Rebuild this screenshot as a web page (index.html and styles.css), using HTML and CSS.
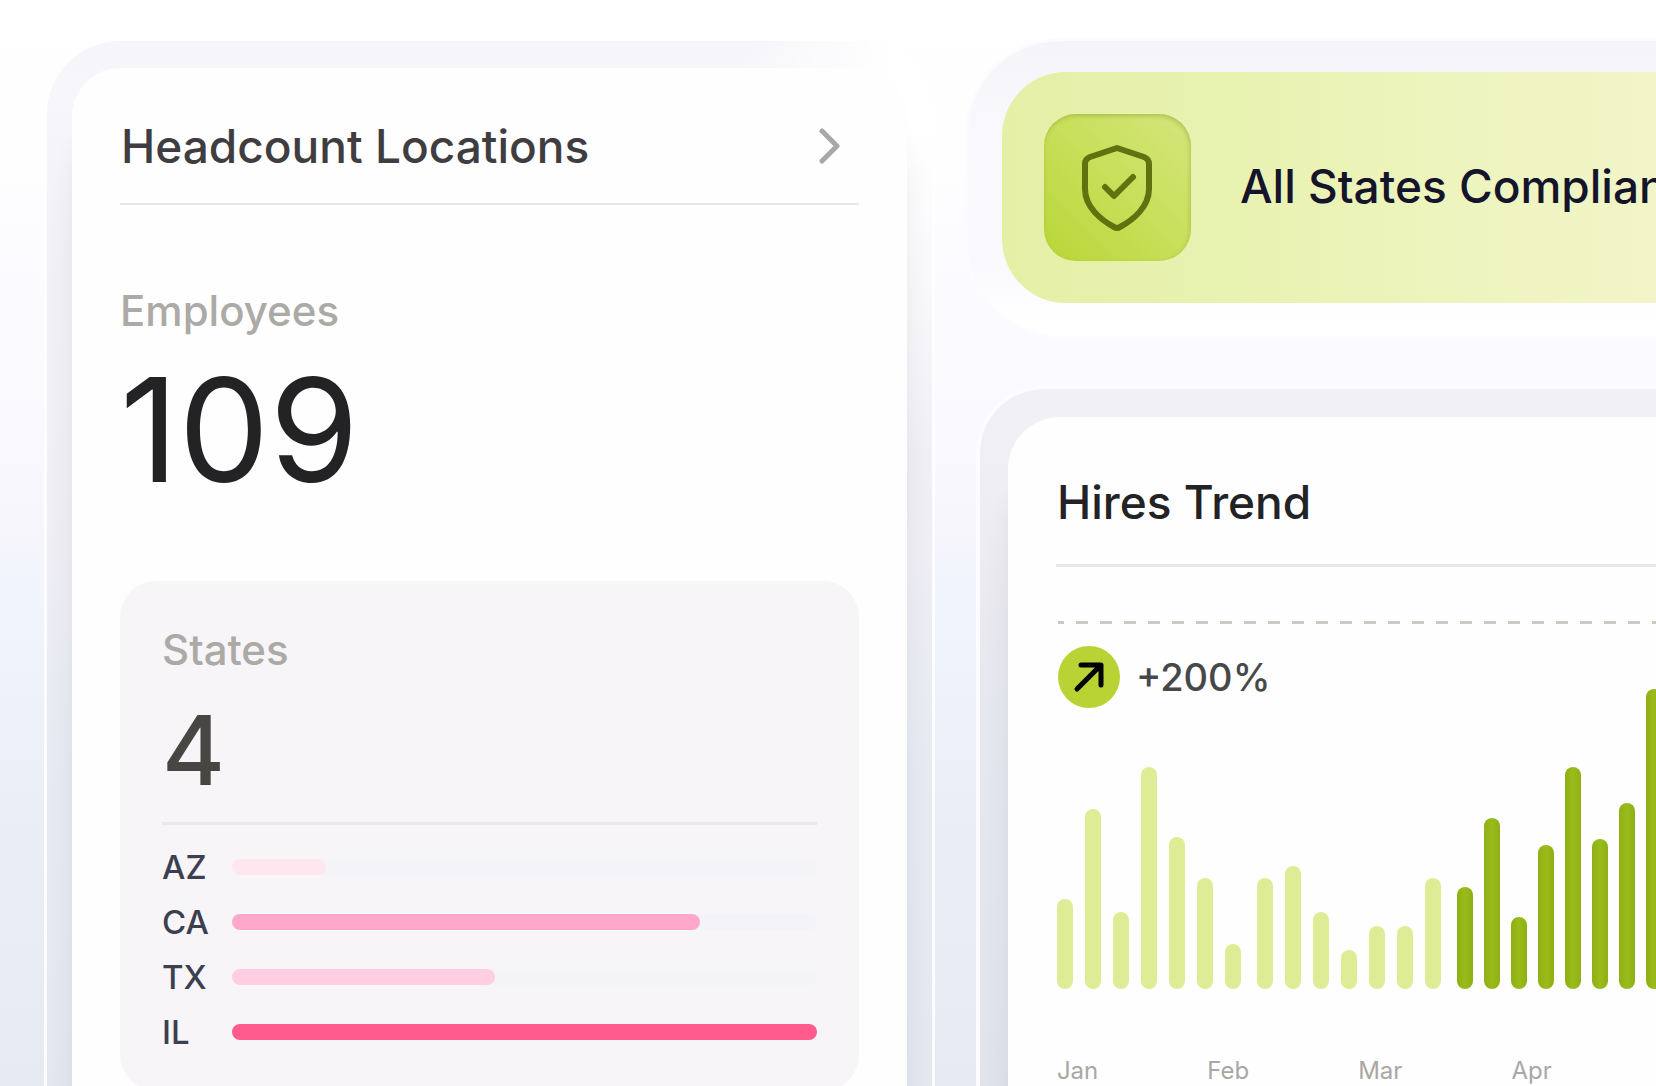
FILE: index.html
```
<!DOCTYPE html>
<html lang="en">
<head>
<meta charset="utf-8">
<meta name="viewport" content="width=device-width, initial-scale=1">
<title>Workforce overview</title>
<link rel="stylesheet" href="styles.css">
</head>
<body>
<main class="dashboard">
  <section class="frame frame-headcount">
    <article class="card">
      <header class="card-header">
        <h2 class="title title-soft">Headcount Locations</h2>
        <button class="open-button" type="button" aria-label="Open headcount locations">
          <svg width="24" height="40" viewBox="0 0 24 40" fill="none" stroke="#aaa8a7" stroke-width="5" stroke-linecap="round" stroke-linejoin="round"><path d="M3 5l15 15L3 35"/></svg>
        </button>
      </header>
      <div class="employees">
        <p class="label">Employees</p>
        <p class="total">109</p>
      </div>
      <section class="states">
        <p class="label">States</p>
        <p class="count">4</p>
        <ul class="state-list">
          <li class="state"><span class="code">AZ</span><span class="track"><span class="fill fill-az" style="width:16%"></span></span></li>
          <li class="state"><span class="code">CA</span><span class="track"><span class="fill fill-ca" style="width:80%"></span></span></li>
          <li class="state"><span class="code">TX</span><span class="track"><span class="fill fill-tx" style="width:45%"></span></span></li>
          <li class="state"><span class="code">IL</span><span class="track"><span class="fill fill-il" style="width:100%"></span></span></li>
        </ul>
      </section>
    </article>
  </section>

  <div class="column">
    <section class="frame frame-status">
      <div class="status">
        <span class="status-icon">
          <svg width="72" height="88" viewBox="0 0 72 88" fill="none" stroke="#5f720f" stroke-width="6" stroke-linecap="round" stroke-linejoin="round"><path d="M36 4L63 13Q68 15 68 20V45C68 63 52 76 39 83Q36 85 33 83C20 76 4 63 4 45V20Q4 15 9 13Z"/><path d="M24 43l9 9 19-19"/></svg>
        </span>
        <h2 class="title title-navy">All States Compliant</h2>
      </div>
    </section>

    <section class="frame frame-trend">
      <article class="card">
        <header class="card-header">
          <h2 class="title">Hires Trend</h2>
        </header>
        <div class="limit"></div>
        <div class="growth">
          <svg width="62" height="62" viewBox="0 0 62 62" fill="none"><circle cx="31" cy="31" r="31" fill="#b9d334"/><path d="M19 43L42 20M23 19H43V39" stroke="#000" stroke-width="5" stroke-linecap="round" stroke-linejoin="round"/></svg>
          <span class="rate">+200%</span>
        </div>
        <div class="chart">
          <div class="bars">
            <i style="height:90px"></i><i style="height:180px"></i><i style="height:77px"></i><i style="height:222px"></i><i style="height:152px"></i><i style="height:111px"></i><i style="height:45px"></i>
          </div>
          <div class="bars">
            <i style="height:111px"></i><i style="height:123px"></i><i style="height:77px"></i><i style="height:39px"></i><i style="height:63px"></i><i style="height:63px"></i><i style="height:111px"></i>
          </div>
          <div class="bars bars-strong">
            <i style="height:102px"></i><i style="height:171px"></i><i style="height:72px"></i><i style="height:144px"></i><i style="height:222px"></i><i style="height:150px"></i><i style="height:186px"></i><i style="height:300px"></i>
          </div>
        </div>
        <div class="months"><span>Jan</span><span>Feb</span><span>Mar</span><span>Apr</span></div>
      </article>
    </section>
  </div>
</main>
</body>
</html>
```

FILE: styles.css
```
* { box-sizing: border-box; }

body {
  margin: 0;
  height: 100vh;
  overflow: hidden;
  font-family: Inter, "Liberation Sans", sans-serif;
  color: #232224;
  background: linear-gradient(180deg, #fff 0%, #fefdff 15%, #fafaff 33%, #f7f6fc 48%, #f0f4fd 56%, #eaeef7 75%, #e6eaf3 100%);
}

h2, p, ul { margin: 0; padding: 0; }
svg { display: block; flex: none; }

.dashboard {
  display: grid;
  grid-template-columns: 53.8vw 53.8vw;
  align-items: start;
  gap: 30px;
  padding: 38px 0 0 44px;
}

.column {
  display: flex;
  flex-direction: column;
  gap: 46px;
}

.frame {
  border: 3px solid #fcfbff;
  background-clip: padding-box;
}

.frame-headcount {
  padding: 27px 25px;
  border-color: transparent;
  border-radius: 76px;
  background:
    radial-gradient(200px 420px at 100% 0, #fff 0%, #fff 20%, rgba(255, 255, 255, 0) 100%) padding-box,
    linear-gradient(180deg, #f5f5fa 0, #f7f6fb 60px, #f2f1f6 200px, #efeef4 500px, #e6eaf2 720px, #e3e7f0 1050px) padding-box,
    linear-gradient(180deg, #fff, #fbfaff) border-box;
}

.card {
  background: #fefefe;
  border-radius: 48px;
  padding: 0 48px 80px;
  box-shadow: 0 60px 30px -8px rgba(60, 60, 80, 0.12);
}

.card-header {
  display: flex;
  align-items: center;
  justify-content: space-between;
  border-bottom: 2px solid #e8e7e9;
}

.frame-headcount .card-header {
  height: 137px;
  padding: 20px 16px 0 1px;
}

.title {
  font-size: 46px;
  line-height: 58px;
  font-weight: 500;
  white-space: nowrap;
}

.title-soft { color: #3f3d40; }
.title-navy { color: #14142b; }

.open-button {
  padding: 0;
  border: 0;
  background: none;
  cursor: pointer;
}

.employees { padding: 80px 0 67px; }

.label {
  font-size: 42px;
  line-height: 52px;
  font-weight: 500;
  color: #abaaa6;
}

.total {
  margin-top: 9px;
  font-size: 144px;
  line-height: 168px;
  font-weight: 400;
}

.states {
  padding: 43px 42px 32px;
  border-radius: 36px;
  background: #f7f5f8;
}

.count {
  padding: 24px 0 22px;
  font-size: 96px;
  line-height: 100px;
  font-weight: 500;
  color: #484643;
  border-bottom: 3px solid #ece7e7;
}

.state-list {
  list-style: none;
  padding-top: 14px;
}

.state {
  display: flex;
  align-items: center;
  height: 55px;
}

.code {
  width: 70px;
  font-size: 33px;
  line-height: 40px;
  font-weight: 500;
  color: #3c3f50;
}

.track {
  flex: 1;
  height: 16px;
  border-radius: 8px;
  background: #f4f3f8;
}

.fill {
  display: block;
  height: 16px;
  border-radius: 8px;
}

.fill-az { background: #ffe6ef; }
.fill-ca { background: #ffa8ca; }
.fill-tx { background: #ffcee2; }
.fill-il { background: #ff5c8d; }

.frame-status {
  padding: 31px 34px 33px;
  border-radius: 96px;
  background: linear-gradient(180deg, #f5f4f9 0, #f9f9fd 30%, #f8f8fd 70%, #fefeff 90%, #fff 100%);
}

.status {
  display: flex;
  align-items: center;
  gap: 49px;
  padding: 42px;
  border-radius: 64px;
  background: linear-gradient(90deg, #e6efa6 0%, #e8f2b0 25%, #f1f5c6 75%, #f3f6cd 100%);
}

.status-icon {
  display: grid;
  place-items: center;
  width: 147px;
  height: 147px;
  border-radius: 32px;
  background: linear-gradient(45deg, #b9d637 0%, #c7df59 50%, #d5e67c 100%);
  box-shadow: inset -1px 2px 4px rgba(110, 130, 20, 0.35);
}

.status .title { padding-bottom: 4px; }

.frame-trend {
  margin-left: 11px;
  padding: 28px 28px;
  border-width: 4px;
  border-radius: 68px;
  background: linear-gradient(180deg, #f0f0f6 0, #efeef4 100px, #e9e9ef 220px, #e4e7ef 400px, #e0e3eb 700px) padding-box;
}

.frame-trend .card { border-radius: 52px; }

.frame-trend .card-header {
  height: 150px;
  padding: 22px 0 0 1px;
  border-width: 3px;
}

.limit {
  height: 3px;
  margin: 54px 0 22px 2px;
  background: repeating-linear-gradient(90deg, #cbcac5 0 12px, transparent 12px 24px) -6px 0;
}

.growth {
  display: flex;
  align-items: center;
  gap: 16px;
  padding-left: 2px;
}

.rate {
  font-size: 38px;
  line-height: 52px;
  font-weight: 500;
  color: #48474a;
}

.chart {
  display: flex;
  align-items: flex-end;
  gap: 16px;
  height: 300px;
  margin-top: -19px;
  padding-left: 1px;
}

.bars {
  display: flex;
  align-items: flex-end;
  gap: 12px;
}

.bars i {
  width: 16px;
  border-radius: 8px;
  background: #deec96;
}

.bars-strong { gap: 11px; }

.bars-strong i {
  background: linear-gradient(90deg, #8eb015, #9abb19 50%, #8eb015);
}

.months {
  display: flex;
  gap: 109px;
  padding: 66px 1px 0;
  font-size: 24px;
  line-height: 32px;
  color: #a9a7a5;
}
```
